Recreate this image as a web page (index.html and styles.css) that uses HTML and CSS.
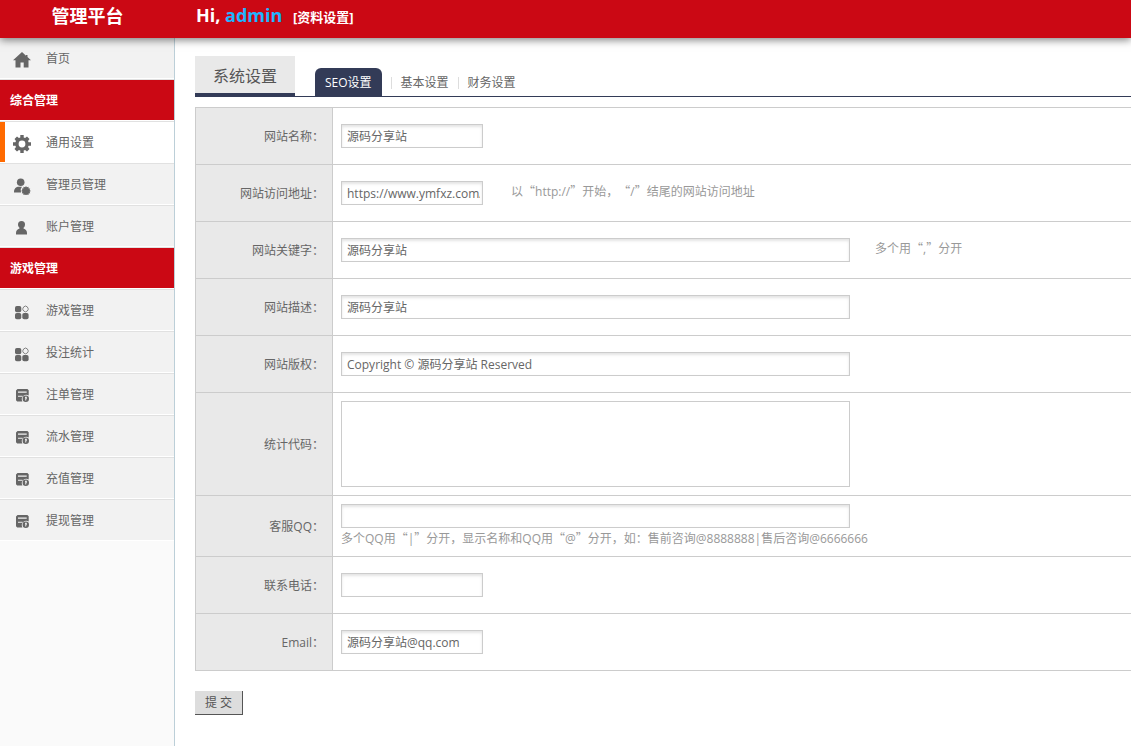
FILE: index.html
```
<!DOCTYPE html>
<html lang="zh-CN">
<head>
<meta charset="utf-8">
<title>管理平台</title>
<link rel="stylesheet" href="styles.css">
</head>
<body>
<svg class="sprite" aria-hidden="true">
  <symbol id="i-home" viewBox="0 0 18 18"><path d="M9 1 0 9.300h2.500V16.500h5v-5h3.200v5h4.800V9.300H18L14.500 6V4h-1.500v.7z"/></symbol>
  <symbol id="i-gear" viewBox="0 0 18 18"><path fill-rule="evenodd" d="M7.300 0h3.400v2.400l1.400.6L14 1.500 16.500 4 15 5.900l.6 1.400H18v3.400h-2.400l-.6 1.400 1.500 1.900-2.500 2.500-1.900-1.500-1.400.6V18H7.300v-2.400L5.900 15 4 16.500 1.500 14 3 12.100l-.6-1.400H0V7.300h2.400L3 5.900 1.500 4 4 1.500 5.900 3l1.400-.6zM9 5.600a3.400 3.400 0 1 0 0 6.800 3.400 3.400 0 0 0 0-6.800z"/></symbol>
  <symbol id="i-admin" viewBox="0 0 18 18"><circle cx="7.700" cy="5.200" r="3.800"/><path d="M1 15.500c0-4 2-5.700 5-5.700h3L7.700 12l.3 3.500z"/><path d="m13 9 .9 1.300 1.600-.6.100 1.700 1.600.1-.6 1.500 1.300.9-1.300.9.600 1.500-1.600.1-.1 1.700-1.600-.6-.9 1.300-.9-1.300-1.600.6-.1-1.700-1.600-.1.600-1.500-1.300-.9 1.300-.9-.6-1.500 1.600-.1.100-1.700 1.600.6z"/></symbol>
  <symbol id="i-user" viewBox="0 0 18 18"><circle cx="8.500" cy="5.500" r="3.500"/><path d="M6.500 8h4v1.500c2.300.8 3.500 2.500 3.500 4.500v1.500H3V14c0-2 1.200-3.700 3.500-4.500z"/></symbol>
  <symbol id="i-apps" viewBox="0 0 18 18"><rect x="2" y="3" width="6.300" height="6.300" rx="1.800"/><rect x="2" y="10" width="6.300" height="6.300" rx="1.800"/><rect x="9.300" y="10" width="6.300" height="6.300" rx="1.800"/><path d="m12.500 3 1.800.9.900 1.800v.8l-.9 1.500-1.800.9-1.800-.9-.9-1.500v-.8l.9-1.800z" fill="none" stroke="currentColor" stroke-width=".8"/></symbol>
  <symbol id="i-bill" viewBox="0 0 18 18"><path fill-rule="evenodd" d="M4.500 2h9.900l1.300 1.300V8.500a4.500 4.500 0 0 0-6.300 6H4.200L3 13.300V3.500zM5 4.500v1.300h8.700V4.500zm0 4.200v1h4.500v-1z"/><path fill-rule="evenodd" d="M12.800 8.500a3.200 3.200 0 1 0 0 6.400 3.200 3.200 0 0 0 0-6.400zM12 9.700h1.800v1.800l-.6 1v1.100h-.9v-2.800H12z"/></symbol>
</svg>

<header class="topbar">
  <h1 class="brand">管理平台</h1>
  <p class="greeting">Hi, <span class="user">admin</span> <a class="profile" href="#">[资料设置]</a></p>
</header>

<div class="layout">
  <nav class="sidebar">
    <a class="item" href="#"><svg class="icon"><use href="#i-home"/></svg>首页</a>
    <h2 class="group">综合管理</h2>
    <a class="item current" href="#"><svg class="icon"><use href="#i-gear"/></svg>通用设置</a>
    <a class="item" href="#"><svg class="icon"><use href="#i-admin"/></svg>管理员管理</a>
    <a class="item" href="#"><svg class="icon"><use href="#i-user"/></svg>账户管理</a>
    <h2 class="group">游戏管理</h2>
    <a class="item" href="#"><svg class="icon"><use href="#i-apps"/></svg>游戏管理</a>
    <a class="item" href="#"><svg class="icon"><use href="#i-apps"/></svg>投注统计</a>
    <a class="item" href="#"><svg class="icon"><use href="#i-bill"/></svg>注单管理</a>
    <a class="item" href="#"><svg class="icon"><use href="#i-bill"/></svg>流水管理</a>
    <a class="item" href="#"><svg class="icon"><use href="#i-bill"/></svg>充值管理</a>
    <a class="item" href="#"><svg class="icon"><use href="#i-bill"/></svg>提现管理</a>
  </nav>

  <main class="content">
    <div class="tabbar">
      <h2 class="title">系统设置</h2>
      <nav class="tabs">
        <a class="tab active" href="#">SEO设置</a>
        <a class="tab" href="#">基本设置</a>
        <a class="tab" href="#">财务设置</a>
      </nav>
    </div>

    <form>
      <table class="settings">
        <tr><th><label for="name">网站名称：</label></th>
          <td><input class="field" id="name" type="text" value="源码分享站"></td></tr>
        <tr><th><label for="url">网站访问地址：</label></th>
          <td><div class="line"><input class="field" id="url" type="text" value="https://www.ymfxz.com/"><span class="hint wide">以<span class="q">“</span>http://<span class="q">”</span>开始，<span class="q">“</span>/<span class="q">”</span>结尾的网站访问地址</span></div></td></tr>
        <tr><th><label for="keys">网站关键字：</label></th>
          <td><div class="line"><input class="field long" id="keys" type="text" value="源码分享站"><span class="hint">多个用<span class="q">“</span>,<span class="q">”</span>分开</span></div></td></tr>
        <tr><th><label for="desc">网站描述：</label></th>
          <td><input class="field long" id="desc" type="text" value="源码分享站"></td></tr>
        <tr><th><label for="copy">网站版权：</label></th>
          <td><input class="field long" id="copy" type="text" value="Copyright © 源码分享站 Reserved"></td></tr>
        <tr><th><label for="stats">统计代码：</label></th>
          <td><textarea class="area" id="stats"></textarea></td></tr>
        <tr><th><label for="qq">客服QQ：</label></th>
          <td><input class="field long" id="qq" type="text"><p class="note">多个QQ用<span class="q">“</span>|<span class="q">”</span>分开，显示名称和QQ用<span class="q">“</span>@<span class="q">”</span>分开，如：售前咨询@8888888|售后咨询@6666666</p></td></tr>
        <tr><th><label for="tel">联系电话：</label></th>
          <td><input class="field" id="tel" type="text"></td></tr>
        <tr><th><label for="email">Email：</label></th>
          <td><input class="field" id="email" type="text" value="源码分享站@qq.com"></td></tr>
      </table>
      <button class="submit" type="submit">提 交</button>
    </form>
  </main>
</div>
</body>
</html>
```
FILE: styles.css
```
* { box-sizing: border-box; }
body, h1, h2, p { margin: 0; }
body {
  display: flex;
  flex-direction: column;
  min-height: 100vh;
  overflow-x: hidden;
  background: #fff;
  color: #666;
  font: 12px/18px "Open Sans", "Noto Sans CJK SC", sans-serif;
  text-spacing-trim: space-all;
}
a { color: inherit; text-decoration: none; }
.sprite { display: none; }

.topbar {
  position: relative;
  display: flex;
  height: 38px;
  background: #cb0814;
  color: #fff;
  font-weight: bold;
  box-shadow: 0 2px 8px rgba(0, 0, 0, .5);
}
.brand { width: 175px; font-size: 18px; line-height: 32px; text-align: center; }
.greeting { padding-left: 21px; font-size: 18px; line-height: 30px; }
.user { color: #1eb4ff; }
.profile { margin-left: 6px; font-size: 13px; }

.layout { display: flex; flex: 1; }
.sidebar {
  flex: none;
  width: 175px;
  margin-top: -1px;
  border-right: 1px solid #bccfd8;
  background: #fafafa;
}
.item, .group {
  display: flex;
  height: 42px;
  border-top: 1px solid #e1e1e1;
  border-bottom: 1px solid #fff;
}
.item { padding-left: 13px; background: #f2f2f2; line-height: 42px; }
.icon { width: 18px; height: 18px; margin: 13px 15px 0 0; fill: #666; color: #666; }
.current {
  padding-left: 13px;
  background: linear-gradient(to right, #ff6a00 5px, #fff 5px);
}
.group {
  padding-left: 10px;
  background: #cb0814;
  background-clip: padding-box;
  color: #fff;
  font-size: 12px;
  line-height: 42px;
}

.content { flex: 1; min-width: 0; padding: 18px 0 20px 20px; }
.tabbar { display: flex; height: 41px; border-bottom: 1px solid #333b57; }
.title {
  width: 100px;
  height: 41px;
  border-bottom: 4px solid #333b57;
  background: #e9e9e9;
  color: #555;
  font-size: 16px;
  font-weight: normal;
  line-height: 40px;
  text-align: center;
}
.tabs { display: flex; align-items: flex-end; margin-left: 20px; }
.tab { height: 28px; padding: 0 9px; line-height: 30px; }
.active { padding: 0 10px; border-radius: 6px 6px 0 0; background: #333b57; color: #fff; }
.tab + .tab::before { content: ""; display: inline-block; height: 12px; margin-right: 9px; border-left: 1px solid #ddd; vertical-align: -2px; }
.tab + .tab { padding-right: 0; }

.settings { width: 100%; margin-top: 10px; border-collapse: collapse; }
.settings th, .settings td { height: 57px; padding: 8px; border: 1px solid #ccc; border-right: 0; }
.settings th { width: 137px; padding-top: 10px; background: #e9e9e9; font-weight: normal; text-align: right; }
.field {
  display: block;
  width: 142px;
  height: 24px;
  padding: 2px 2px 2px 5px;
  border: 1px solid #ccc;
  background: #fff;
  box-shadow: inset 0 2px 3px #e4e4e4;
  color: #666;
  font: inherit;
}
.long { width: 509px; }
.line { display: flex; }
.hint { margin-left: 25px; color: #999; line-height: 20px; }
.wide { margin-left: 28px; }
.note { padding-top: 1px; color: #999; }
.q { font-family: "Noto Sans CJK SC", sans-serif; }
.area { display: block; width: 509px; height: 86px; border: 1px solid #ccc; resize: none; font: inherit; }
.submit {
  display: block;
  width: 48px;
  height: 24px;
  margin-top: 20px;
  padding: 0;
  border: 0 solid #555;
  border-width: 0 1px 1px 0;
  background: #ddd;
  color: #555;
  font: inherit;
}
```
